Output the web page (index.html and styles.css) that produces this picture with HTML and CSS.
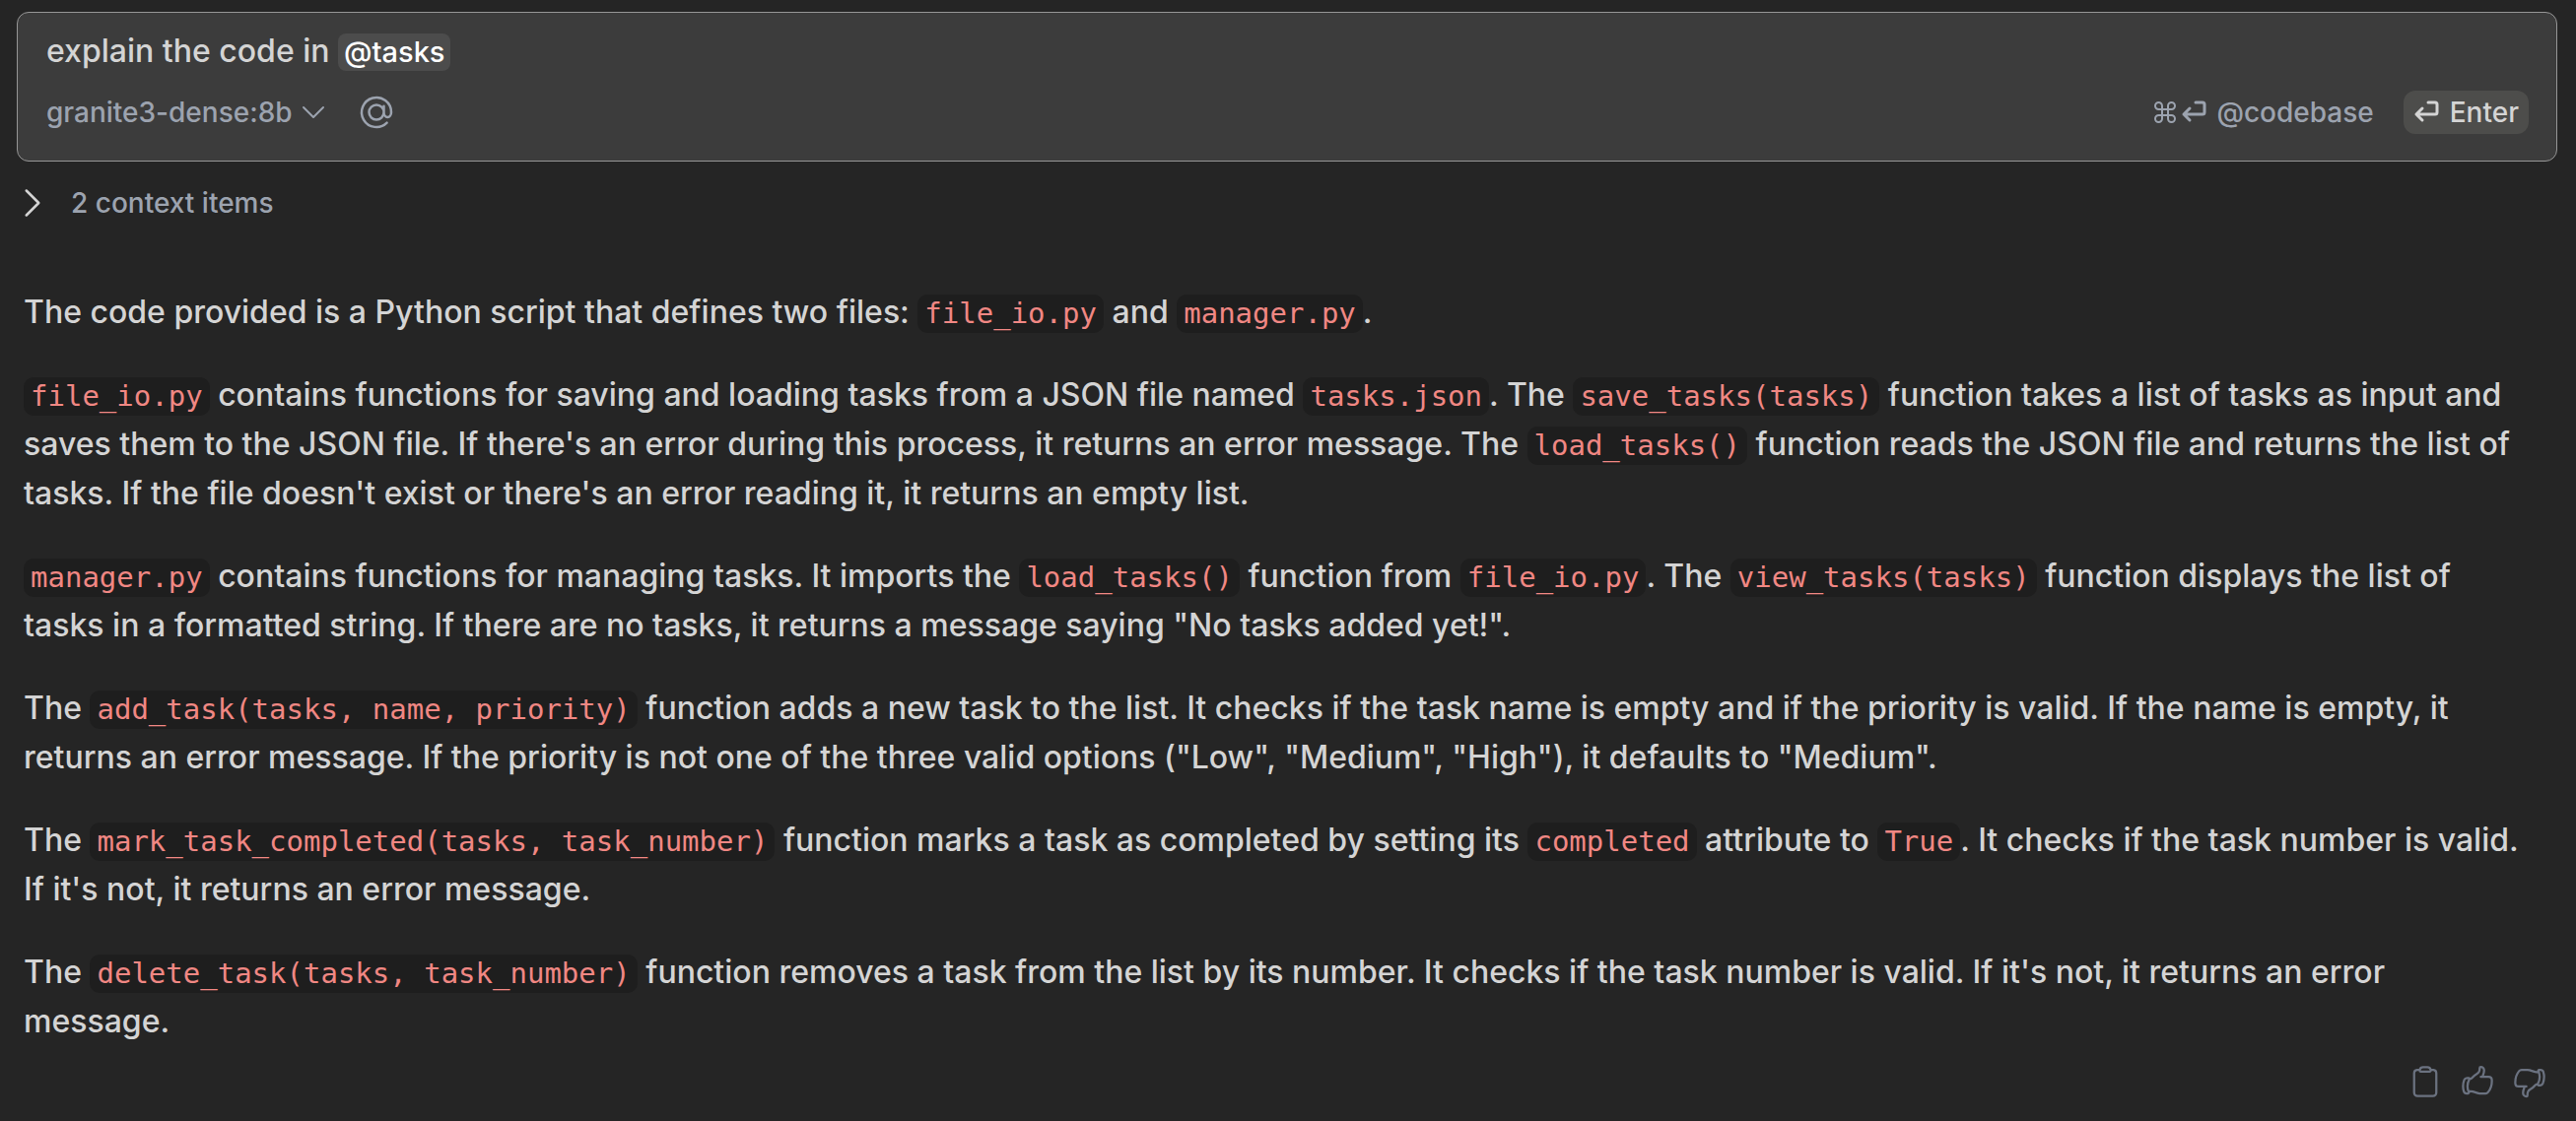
FILE: index.html
```html
<!DOCTYPE html>
<html lang="en">
<head>
<meta charset="utf-8">
<meta name="viewport" content="width=device-width, initial-scale=1">
<title>Chat</title>
<link rel="stylesheet" href="styles.css">
</head>
<body>
<main class="chat">
  <form class="composer">
    <div class="prompt" role="textbox" aria-label="Message" contenteditable="true" spellcheck="false">explain the code in <span class="mention">@tasks</span></div>
    <div class="toolbar">
      <div class="toolbar-group">
        <label class="model">
          <select class="model-select" aria-label="Model"><option>granite3-dense:8b</option></select>
          <svg class="model-chevron" viewBox="0 0 24 24" aria-hidden="true"><path d="m19.5 8.25-7.5 7.5-7.5-7.5"/></svg>
        </label>
        <button class="tool" type="button" aria-label="Add context">
          <svg class="at-icon" viewBox="0 0 24 24" aria-hidden="true"><path d="M16.5 12a4.5 4.5 0 1 1-9 0 4.5 4.5 0 0 1 9 0Zm0 0c0 1.657 1.007 3 2.25 3S21 13.657 21 12a9 9 0 1 0-2.636 6.364M16.5 12V8.25"/></svg>
        </button>
      </div>
      <div class="toolbar-group actions">
        <button class="tool codebase" type="button">
          <svg class="key-icon command" viewBox="0 0 24 24" aria-hidden="true"><path d="M9 9V5.500a3.500 3.500 0 1 0-3.500 3.500h13a3.500 3.500 0 1 0-3.500-3.500v13a3.500 3.500 0 1 0 3.500-3.500h-13a3.500 3.500 0 1 0 3.500 3.500V9"/></svg>
          <svg class="key-icon" viewBox="0 0 26 24" aria-hidden="true"><path d="M15 2h7q2 0 2 2v8q0 2-2 2H3M9 8l-6 6 6 6"/></svg>
          <span class="tool-text">@codebase</span>
        </button>
        <button class="tool enter" type="submit">
          <svg class="key-icon" viewBox="0 0 26 24" aria-hidden="true"><path d="M15 2h7q2 0 2 2v8q0 2-2 2H3M9 8l-6 6 6 6"/></svg>
          <span class="tool-text">Enter</span>
        </button>
      </div>
    </div>
  </form>

  <button class="context" type="button" aria-expanded="false">
    <svg class="context-chevron" viewBox="0 0 24 24" aria-hidden="true"><path d="m8.250 4.500 7.500 7.500-7.500 7.500"/></svg>
    <span>2 context items</span>
  </button>

  <article class="answer">
    <p>The code provided is a Python script that defines two files: <code>file_io.py</code> and <code>manager.py</code>.</p>
    <p><code>file_io.py</code> contains functions for saving and loading tasks from a JSON file named <code>tasks.json</code>. The <code>save_tasks(tasks)</code> function takes a list of tasks as input and saves them to the JSON file. If there's an error during this process, it returns an error message. The <code>load_tasks()</code> function reads the JSON file and returns the list of tasks. If the file doesn't exist or there's an error reading it, it returns an empty list.</p>
    <p><code>manager.py</code> contains functions for managing tasks. It imports the <code>load_tasks()</code> function from <code>file_io.py</code>. The <code>view_tasks(tasks)</code> function displays the list of tasks in a formatted string. If there are no tasks, it returns a message saying "No tasks added yet!".</p>
    <p>The <code>add_task(tasks, name, priority)</code> function adds a new task to the list. It checks if the task name is empty and if the priority is valid. If the name is empty, it returns an error message. If the priority is not one of the three valid options ("Low", "Medium", "High"), it defaults to "Medium".</p>
    <p>The <code>mark_task_completed(tasks, task_number)</code> function marks a task as completed by setting its <code>completed</code> attribute to <code>True</code>. It checks if the task number is valid. If it's not, it returns an error message.</p>
    <p>The <code>delete_task(tasks, task_number)</code> function removes a task from the list by its number. It checks if the task number is valid. If it's not, it returns an error message.</p>
  </article>

  <footer class="feedback">
    <button class="tool" type="button" aria-label="Copy">
      <svg class="feedback-icon" viewBox="0 0 24 24" aria-hidden="true"><path d="M15.666 3.888A2.250 2.250 0 0 0 13.500 2.250h-3c-1.030 0-1.900.693-2.166 1.638m7.332 0c.055.194.084.400.084.612a.750.750 0 0 1-.750.750H9a.750.750 0 0 1-.750-.750c0-.212.030-.418.084-.612m7.332 0c.646.049 1.288.110 1.927.184 1.100.128 1.907 1.077 1.907 2.185V19.500a2.250 2.250 0 0 1-2.250 2.250H6.750A2.250 2.250 0 0 1 4.500 19.500V6.257c0-1.108.806-2.057 1.907-2.185a48.208 48.208 0 0 1 1.927-.184"/></svg>
    </button>
    <button class="tool" type="button" aria-label="Good response">
      <svg class="feedback-icon" viewBox="0 0 24 24" aria-hidden="true"><path d="M6.633 10.250c.806 0 1.533-.446 2.031-1.080a9.041 9.041 0 0 1 2.861-2.400c.723-.384 1.350-.956 1.653-1.715a4.498 4.498 0 0 0 .322-1.672V2.750a.750.750 0 0 1 .750-.750 2.250 2.250 0 0 1 2.250 2.250c0 1.152-.260 2.243-.723 3.218-.266.558.107 1.282.725 1.282m0 0h3.126c1.026 0 1.945.694 2.054 1.715.045.422.068.850.068 1.285a11.950 11.950 0 0 1-2.649 7.521c-.388.482-.987.729-1.605.729H13.480c-.483 0-.964-.078-1.423-.230l-3.114-1.040a4.501 4.501 0 0 0-1.423-.230H5.904m10.598-9.750H14.250M5.904 18.500c.083.205.173.405.270.602.197.400-.078.898-.523.898h-.908c-.889 0-1.713-.518-1.972-1.368a12 12 0 0 1-.521-3.507c0-1.553.295-3.036.831-4.398C3.387 9.953 4.167 9.500 5 9.500h1.053c.472 0 .745.556.500.960a8.958 8.958 0 0 0-1.302 4.665c0 1.194.232 2.333.654 3.375Z"/></svg>
    </button>
    <button class="tool" type="button" aria-label="Bad response">
      <svg class="feedback-icon flipped" viewBox="0 0 24 24" aria-hidden="true"><path d="M6.633 10.250c.806 0 1.533-.446 2.031-1.080a9.041 9.041 0 0 1 2.861-2.400c.723-.384 1.350-.956 1.653-1.715a4.498 4.498 0 0 0 .322-1.672V2.750a.750.750 0 0 1 .750-.750 2.250 2.250 0 0 1 2.250 2.250c0 1.152-.260 2.243-.723 3.218-.266.558.107 1.282.725 1.282m0 0h3.126c1.026 0 1.945.694 2.054 1.715.045.422.068.850.068 1.285a11.950 11.950 0 0 1-2.649 7.521c-.388.482-.987.729-1.605.729H13.480c-.483 0-.964-.078-1.423-.230l-3.114-1.040a4.501 4.501 0 0 0-1.423-.230H5.904m10.598-9.750H14.250M5.904 18.500c.083.205.173.405.270.602.197.400-.078.898-.523.898h-.908c-.889 0-1.713-.518-1.972-1.368a12 12 0 0 1-.521-3.507c0-1.553.295-3.036.831-4.398C3.387 9.953 4.167 9.500 5 9.500h1.053c.472 0 .745.556.500.960a8.958 8.958 0 0 0-1.302 4.665c0 1.194.232 2.333.654 3.375Z"/></svg>
    </button>
  </footer>
</main>
</body>
</html>
```
FILE: styles.css
```css
* {
  box-sizing: border-box;
}

body {
  margin: 0;
  background: #252525;
  color: #d4d4d4;
  font-family: Inter, "Liberation Sans", sans-serif;
  font-size: 32px;
  font-weight: 500;
  line-height: 50px;
}

button,
select {
  margin: 0;
  padding: 0;
  border: 0;
  background: none;
  color: inherit;
  font: inherit;
}

svg {
  display: block;
  fill: none;
  stroke: currentColor;
  stroke-width: 1.5;
  stroke-linecap: round;
  stroke-linejoin: round;
}

.chat {
  display: flex;
  flex-direction: column;
  padding: 12px 19px 20px 17px;
}

.composer {
  display: flex;
  flex-direction: column;
  gap: 16px;
  padding: 20px 28px 23px 29px;
  border: 1px solid #969696;
  border-radius: 12px;
  background: #3c3c3c;
}

.prompt {
  line-height: 38px;
  outline: 0;
}

.mention {
  display: inline-block;
  padding: 0 6px;
  border-radius: 8px;
  background: #4c4c4c;
  color: #fff;
  font-size: 29px;
}

.toolbar,
.toolbar-group,
.model,
.tool {
  display: flex;
  align-items: center;
}

.toolbar {
  justify-content: space-between;
  height: 52px;
  color: #9ca3af;
  font-size: 28px;
  line-height: 44px;
}

.toolbar-group {
  gap: 28px;
}

.actions {
  gap: 30px;
}

.model {
  gap: 5px;
}

.model-select {
  appearance: none;
}

.model-chevron {
  width: 32px;
  height: 32px;
}

.at-icon {
  width: 40px;
  height: 40px;
}

.key-icon {
  width: 26px;
  height: 24px;
  stroke-width: 3;
}

.command {
  width: 24px;
  stroke-width: 2;
}

.codebase {
  gap: 4px;
}

.codebase .tool-text {
  padding-left: 6px;
}

.enter {
  gap: 11px;
  padding: 0 10px;
  border-radius: 12px;
  background: #4d4d4b;
  color: #d4d4d4;
}

.context {
  display: flex;
  align-items: center;
  align-self: flex-start;
  gap: 19px;
  margin: 20px 0 0 -4px;
  color: #9ca3af;
  font-size: 28px;
  line-height: 44px;
}

.context-chevron {
  width: 40px;
  height: 40px;
  color: #d4d4d4;
}

.answer {
  display: flex;
  flex-direction: column;
  gap: 34px;
  padding: 64px 30px 18px 7px;
}

.answer p {
  margin: 0;
}

.answer code {
  display: inline-block;
  padding: 0 7px;
  border-radius: 10px;
  background: #1e1e1e;
  color: #f08783;
  font-family: "DejaVu Sans Mono", monospace;
  font-size: 29px;
  font-weight: 400;
  line-height: 39px;
}

.feedback {
  display: flex;
  justify-content: flex-end;
  gap: 17px;
  padding-right: 10px;
  color: #6b7280;
}

.feedback-icon {
  width: 36px;
  height: 36px;
}

.flipped {
  transform: rotate(180deg);
}
```
